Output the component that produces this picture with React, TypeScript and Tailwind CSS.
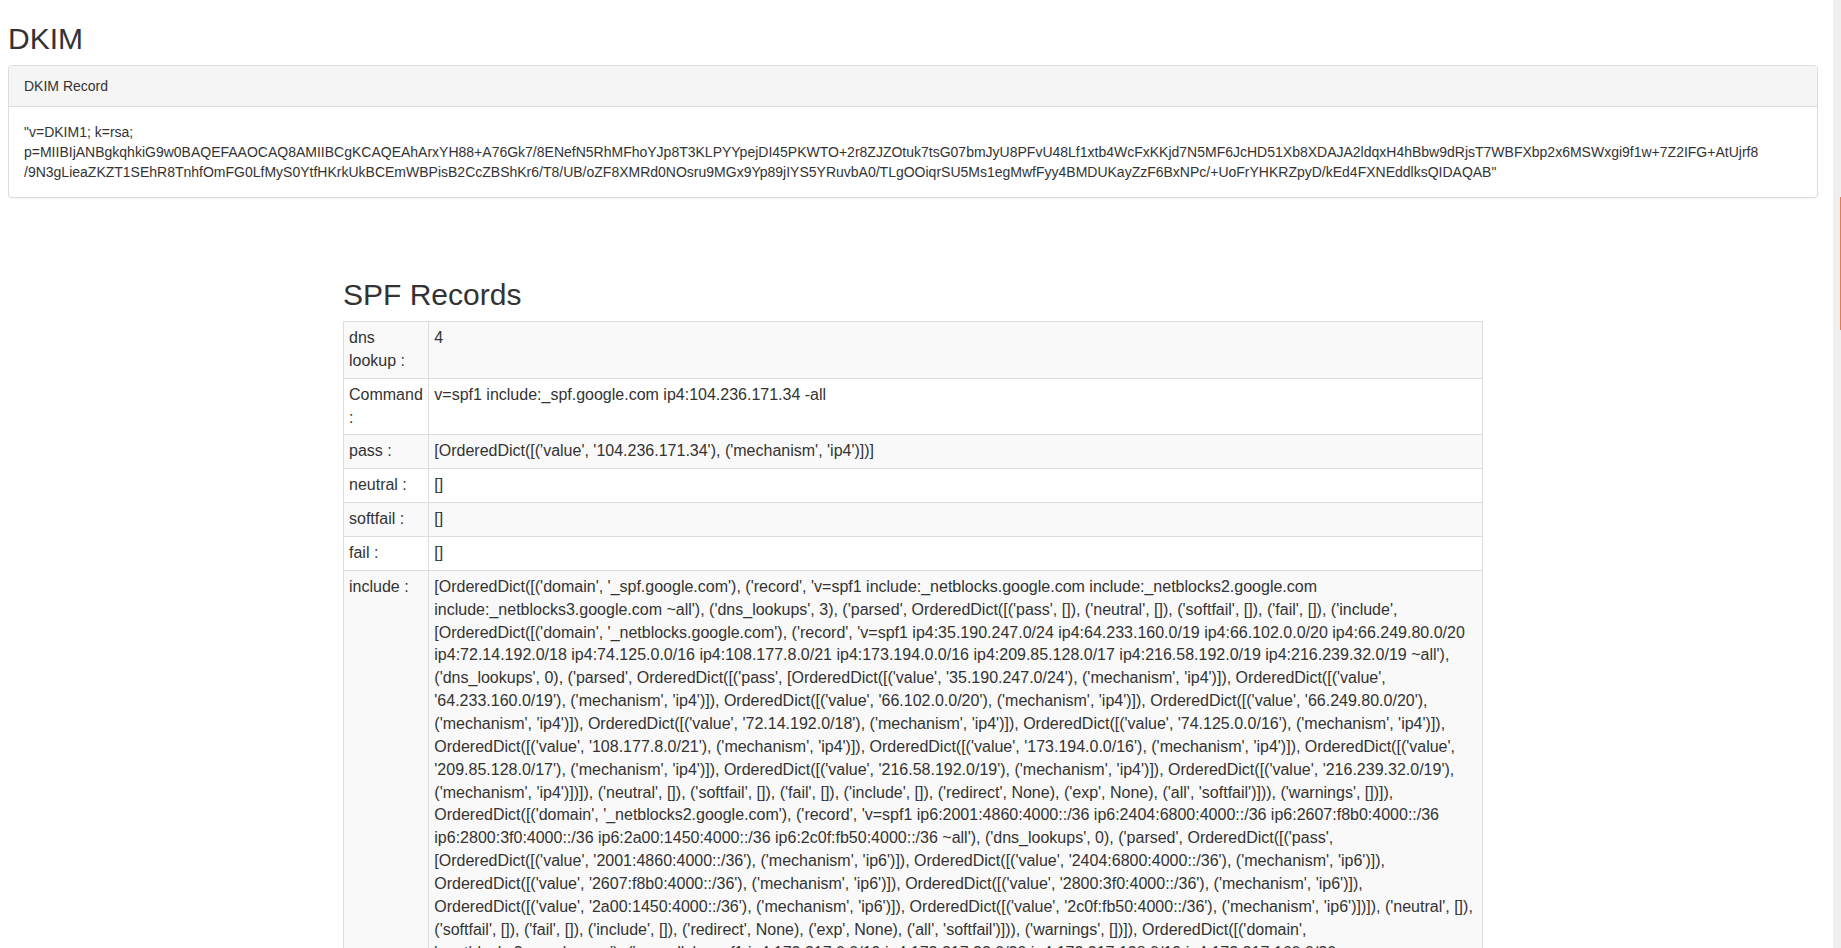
import React from "react";

const dkimKey =
  "\"v=DKIM1; k=rsa; p=MIIBIjANBgkqhkiG9w0BAQEFAAOCAQ8AMIIBCgKCAQEAhArxYH88+A76Gk7/8ENefN5RhMFhoYJp8T3KLPYYpejDI45PKWTO+2r8ZJZOtuk7tsG07bmJyU8PFvU48Lf1xtb4WcFxKKjd7N5MF6JcHD51Xb8XDAJA2ldqxH4hBbw9dRjsT7WBFXbp2x6MSWxgi9f1w+7Z2IFG+AtUjrf8 /9N3gLieaZKZT1SEhR8TnhfOmFG0LfMyS0YtfHKrkUkBCEmWBPisB2CcZBShKr6/T8/UB/oZF8XMRd0NOsru9MGx9Yp89jIYS5YRuvbA0/TLgOOiqrSU5Ms1egMwfFyy4BMDUKayZzF6BxNPc/+UoFrYHKRZpyD/kEd4FXNEddlksQIDAQAB\"";

const includeText =
  "[OrderedDict([('domain', '_spf.google.com'), ('record', 'v=spf1 include:_netblocks.google.com include:_netblocks2.google.com include:_netblocks3.google.com ~all'), ('dns_lookups', 3), ('parsed', OrderedDict([('pass', []), ('neutral', []), ('softfail', []), ('fail', []), ('include', [OrderedDict([('domain', '_netblocks.google.com'), ('record', 'v=spf1 ip4:35.190.247.0/24 ip4:64.233.160.0/19 ip4:66.102.0.0/20 ip4:66.249.80.0/20 ip4:72.14.192.0/18 ip4:74.125.0.0/16 ip4:108.177.8.0/21 ip4:173.194.0.0/16 ip4:209.85.128.0/17 ip4:216.58.192.0/19 ip4:216.239.32.0/19 ~all'), ('dns_lookups', 0), ('parsed', OrderedDict([('pass', [OrderedDict([('value', '35.190.247.0/24'), ('mechanism', 'ip4')]), OrderedDict([('value', '64.233.160.0/19'), ('mechanism', 'ip4')]), OrderedDict([('value', '66.102.0.0/20'), ('mechanism', 'ip4')]), OrderedDict([('value', '66.249.80.0/20'), ('mechanism', 'ip4')]), OrderedDict([('value', '72.14.192.0/18'), ('mechanism', 'ip4')]), OrderedDict([('value', '74.125.0.0/16'), ('mechanism', 'ip4')]), OrderedDict([('value', '108.177.8.0/21'), ('mechanism', 'ip4')]), OrderedDict([('value', '173.194.0.0/16'), ('mechanism', 'ip4')]), OrderedDict([('value', '209.85.128.0/17'), ('mechanism', 'ip4')]), OrderedDict([('value', '216.58.192.0/19'), ('mechanism', 'ip4')]), OrderedDict([('value', '216.239.32.0/19'), ('mechanism', 'ip4')])]), ('neutral', []), ('softfail', []), ('fail', []), ('include', []), ('redirect', None), ('exp', None), ('all', 'softfail')])), ('warnings', [])]), OrderedDict([('domain', '_netblocks2.google.com'), ('record', 'v=spf1 ip6:2001:4860:4000::/36 ip6:2404:6800:4000::/36 ip6:2607:f8b0:4000::/36 ip6:2800:3f0:4000::/36 ip6:2a00:1450:4000::/36 ip6:2c0f:fb50:4000::/36 ~all'), ('dns_lookups', 0), ('parsed', OrderedDict([('pass', [OrderedDict([('value', '2001:4860:4000::/36'), ('mechanism', 'ip6')]), OrderedDict([('value', '2404:6800:4000::/36'), ('mechanism', 'ip6')]), OrderedDict([('value', '2607:f8b0:4000::/36'), ('mechanism', 'ip6')]), OrderedDict([('value', '2800:3f0:4000::/36'), ('mechanism', 'ip6')]), OrderedDict([('value', '2a00:1450:4000::/36'), ('mechanism', 'ip6')]), OrderedDict([('value', '2c0f:fb50:4000::/36'), ('mechanism', 'ip6')])]), ('neutral', []), ('softfail', []), ('fail', []), ('include', []), ('redirect', None), ('exp', None), ('all', 'softfail')])), ('warnings', [])]), OrderedDict([('domain', '_netblocks3.google.com'), ('record', 'v=spf1 ip4:172.217.0.0/19 ip4:172.217.32.0/20 ip4:172.217.128.0/19 ip4:172.217.160.0/20 ip4:172.217.192.0/19 ip4:172.253.56.0/21 ip4:172.253.112.0/20 ip4:108.177.96.0/19 ip4:35.191.0.0/16 ip4:130.211.0.0/22 ~all'), ('dns_lookups', 0), ('parsed', OrderedDict([('pass', [OrderedDict([('value', '172.217.0.0/19'), ('mechanism', 'ip4')]), OrderedDict([('value', '172.217.32.0/20'), ('mechanism', 'ip4')]), OrderedDict([('value', '172.217.128.0/19'), ('mechanism', 'ip4')]), OrderedDict([('value', '172.217.160.0/20'), ('mechanism', 'ip4')])]), ('neutral', []), ('softfail', []), ('fail', []), ('include', []), ('redirect', None), ('exp', None), ('all', 'softfail')])), ('warnings', [])])]), ('redirect', None), ('exp', None), ('all', 'fail')])), ('warnings', [])])]";

const rows: [string, string][] = [
  ["dns lookup :", "4"],
  ["Command :", "v=spf1 include:_spf.google.com ip4:104.236.171.34 -all"],
  ["pass :", "[OrderedDict([('value', '104.236.171.34'), ('mechanism', 'ip4')])]"],
  ["neutral :", "[]"],
  ["softfail :", "[]"],
  ["fail :", "[]"],
  ["include :", includeText],
];

export default function App() {
  return (
    <div className="flex h-[948px] w-full overflow-hidden bg-white font-['Liberation_Sans',Arial,sans-serif] text-[14px] leading-[20px] text-[#333]">
      {/* Page */}
      <div className="w-[1826px] shrink-0 px-[8px]">
        <h2 className="mt-[22px] mb-[10px] text-[30px] leading-[33px] font-normal">DKIM</h2>

        {/* DKIM panel */}
        <div className="rounded-[4px] border border-[#ddd] bg-white shadow-[0_1px_1px_rgba(0,0,0,0.05)]">
          <div className="rounded-t-[3px] border-b border-[#ddd] bg-[#f5f5f5] px-[15px] py-[10px]">
            DKIM Record
          </div>
          <div className="p-[15px]">{dkimKey}</div>
        </div>

        {/* SPF */}
        <div className="mx-auto w-[1170px] px-[15px]">
          <h2 className="mt-[80px] mb-[10px] text-[30px] leading-[33px] font-normal">SPF Records</h2>
          <table className="w-full border-collapse border border-[#ddd] text-[16px] leading-[22.86px]">
            <tbody>
              {rows.map(([label, value], i) => (
                <tr key={label} className={i % 2 === 0 ? "bg-[#f9f9f9]" : "bg-white"}>
                  <td className="border border-[#ddd] p-[5px] align-top">{label}</td>
                  <td className="border border-[#ddd] p-[5px] align-top">{value}</td>
                </tr>
              ))}
            </tbody>
          </table>
        </div>
      </div>

      {/* Scrollbar */}
      <div className="w-[7px] shrink-0" />
      <div className="flex w-[8px] shrink-0 flex-col items-end bg-[#f0efee]">
        <div className="mt-[197px] h-[133px] w-px bg-[#f07746]" />
      </div>
    </div>
  );
}
